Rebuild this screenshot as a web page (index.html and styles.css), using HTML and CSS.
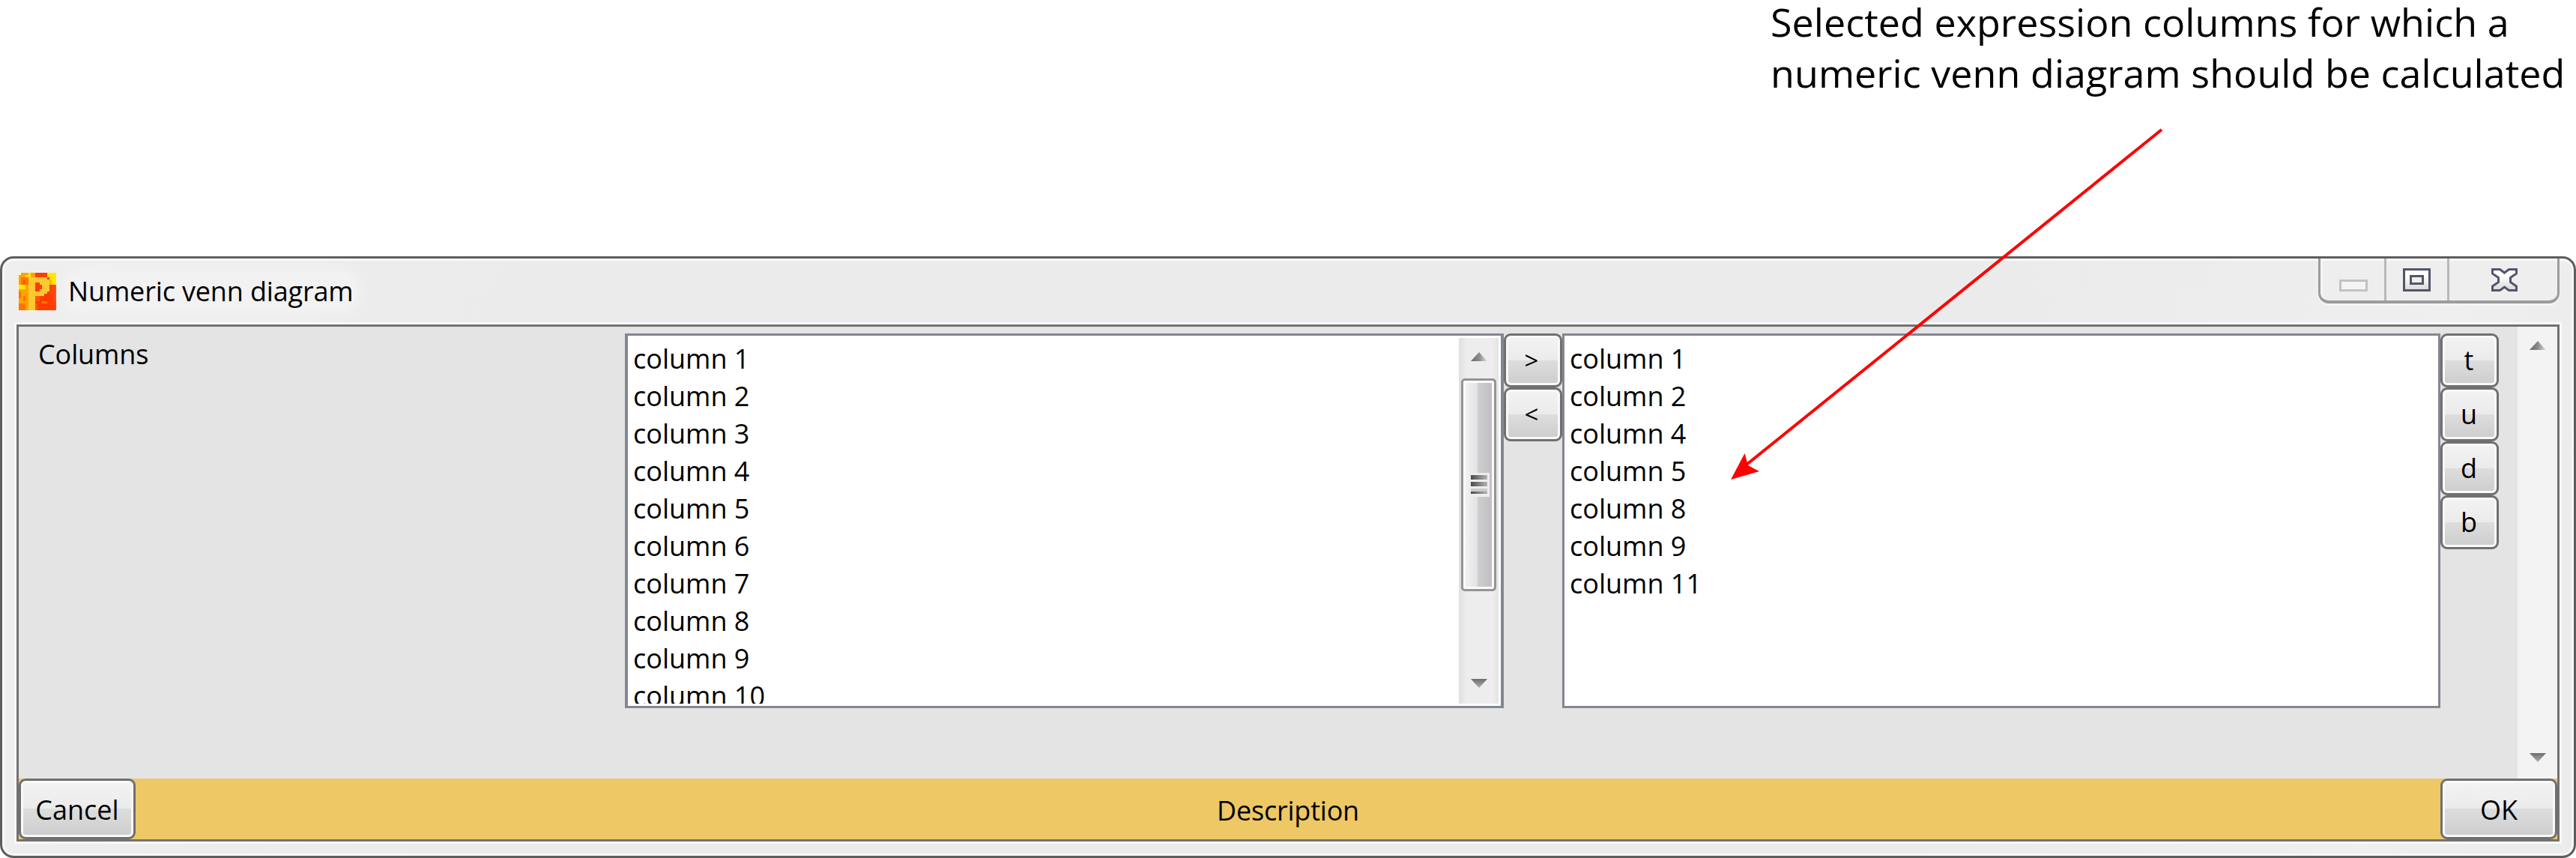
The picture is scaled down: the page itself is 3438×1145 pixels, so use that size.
FILE: index.html
```html
<!DOCTYPE html>
<html lang="en">
<head>
<meta charset="utf-8">
<title>Numeric venn diagram</title>
<link rel="stylesheet" href="styles.css">
</head>
<body>
<div class="page">
  <p class="note"><span class="note-line first">Selected expression columns for which a</span><span class="note-line">numeric venn diagram should be calculated</span></p>

  <div class="window">
    <header class="titlebar">
      <svg class="app-icon" width="50" height="50" viewBox="0 0 16 16" shape-rendering="crispEdges">
        <path fill="#ff3c00" d="M0 0h16v16H0z"/>
        <path fill="#ffa200" d="M0 0h7v2H4v14H0zM5 0h2v2H5z"/>
        <path fill="#ff7400" d="M1 2h3v3H1zM0 8h1v3H0zM0 13h3v3H0zM2 10h1v2H2zM10 12h2v1h-2z"/>
        <path fill="#ff5a00" d="M2 3h1v2H2zM7 10h2v2H7zM7 13h1v3H7z"/>
        <path fill="#ffe600" d="M0 5h2v2H0zM1 5h2v2H1zM3 1h1v1H3zM4 0h1v2H4zM12 0h4v5h-2V3h-1V2h-1z"/>
        <path fill="#ffffb0" d="M0 0h1v1H0z"/>
        <path fill="#ffb400" d="M13 3h1v2h-1z"/>
        <path fill="#ffc830" fill-rule="evenodd" d="M4 2h8v1h1v5h-1v1h-1v1H7v6H4zM7 4v4h2V7h1V5H9V4z"/>
      </svg>
      <span class="title">Numeric venn diagram</span>
      <div class="controls">
        <span class="control minimize"><svg width="38" height="16" viewBox="0 0 38 16"><path d="M1.5 1.5h35v13h-35z" fill="#f4f4f4" stroke="#c2c2c2" stroke-width="3"/></svg></span>
        <span class="control maximize"><svg width="37" height="31" viewBox="0 0 37 31"><path d="M1.5 1.5h34v28h-34z" fill="url(#face)" stroke="#53566a" stroke-width="3"/><path d="M10.500 10.500h16v10h-16z" fill="#eee" stroke="#53566a" stroke-width="3"/></svg></span>
        <span class="control close"><svg width="35" height="31" viewBox="0 0 35 31"><path d="M1.500 1.500H11.500L17.500 6 23.500 1.500H33.500V7L25.500 12.500V18.500L33.500 24V29.500H23.500L17.500 25 11.500 29.500H1.500V24L9.500 18.500V12.500L1.500 7z" fill="url(#face)" stroke="#53566a" stroke-width="3"/></svg></span>
      </div>
    </header>

    <main class="client">
      <section class="form">
        <div class="label">Columns</div>
        <div class="list source">
          <ul class="items">
            <li>column 1</li><li>column 2</li><li>column 3</li><li>column 4</li><li>column 5</li><li>column 6</li><li>column 7</li><li>column 8</li><li>column 9</li><li>column 10</li>
          </ul>
          <div class="scrollbar inner">
            <svg class="arrow" width="22" height="12" viewBox="0 0 22 12"><path d="M0 12 11 0l11 12z" fill="url(#up)"/></svg>
            <div class="thumb"><svg width="28" height="32" viewBox="0 0 28 32"><path d="M0 0h28v32H0z" fill="#ededed"/><path d="M3 3h22v6H3zM3 12h22v6H3zM3 25h22v3H3z" fill="url(#grip)"/><path d="M3 21h22v4H3z" fill="#cacaca"/></svg></div>
            <svg class="arrow" width="22" height="12" viewBox="0 0 22 12"><path d="M0 0h22L11 12z" fill="url(#down)"/></svg>
          </div>
        </div>
        <div class="buttons">
          <button class="btn symbol">&gt;</button>
          <button class="btn symbol">&lt;</button>
        </div>
        <div class="list target">
          <ul class="items">
            <li>column 1</li><li>column 2</li><li>column 4</li><li>column 5</li><li>column 8</li><li>column 9</li><li>column 11</li>
          </ul>
        </div>
        <div class="buttons">
          <button class="btn">t</button>
          <button class="btn">u</button>
          <button class="btn">d</button>
          <button class="btn">b</button>
        </div>
        <div class="scrollbar outer">
          <svg class="arrow" width="22" height="12" viewBox="0 0 22 12"><path d="M0 12 11 0l11 12z" fill="url(#up)"/></svg>
          <svg class="arrow" width="22" height="12" viewBox="0 0 22 12"><path d="M0 0h22L11 12z" fill="url(#down)"/></svg>
        </div>
      </section>
      <footer class="footer">
        <button class="btn wide">Cancel</button>
        <span class="description">Description</span>
        <button class="btn wide">OK</button>
      </footer>
    </main>
  </div>

  <svg class="pointer" width="3438" height="1145" viewBox="0 0 3438 1145">
    <defs>
      <linearGradient id="up"><stop offset="0" stop-color="#6a6a6a"/><stop offset=".5" stop-color="#8a8a8a"/><stop offset="1" stop-color="#e0e0e0"/></linearGradient>
      <linearGradient id="down" x2="0" y2="1"><stop offset="0" stop-color="#6c6c6c"/><stop offset="1" stop-color="#b0b0b0"/></linearGradient>
      <linearGradient id="grip"><stop offset="0" stop-color="#4a4a4a"/><stop offset="1" stop-color="#b4b4b4"/></linearGradient>
      <linearGradient id="face" x2="0" y2="1"><stop offset=".3" stop-color="#fff"/><stop offset="1" stop-color="#d8d8d8"/></linearGradient>
    </defs>
    <path d="M2885 173 2331 620" stroke="#f00" stroke-width="4"/>
    <path d="M2310 640 2328.500 605 2333 621 2348 629z" fill="#f00"/>
  </svg>
</div>
</body>
</html>
```
FILE: styles.css
```css
* { box-sizing: border-box; }

body {
  margin: 0;
  background: #fff;
  color: #000;
  font: 36px/50px "Open Sans", "Noto Sans", sans-serif;
}

.page {
  position: relative;
  width: 3438px;
  height: 1145px;
  display: flex;
  flex-direction: column;
  overflow: hidden;
}

.note {
  flex: 0 0 342px;
  margin: 0;
  padding-left: 2363px;
  font-size: 52px;
  line-height: 70px;
  letter-spacing: .05px;
  white-space: nowrap;
}

.note-line { display: block; }
.note-line.first { line-height: 58px; margin-bottom: 4px; }

.window {
  flex: 1;
  display: flex;
  flex-direction: column;
  padding: 0 19px 19px;
  border: 3px solid #5e5e5e;
  border-radius: 18px;
  background: linear-gradient(100deg, #efefef, #ebebeb 20%, #ebebeb 75%, #efefef 92%, #ebebeb);
  box-shadow: inset 0 0 0 3px #f8f8f8;
}

.titlebar {
  flex: 0 0 88px;
  display: flex;
  align-items: flex-start;
  padding-left: 3px;
}

.app-icon { margin-top: 19px; }

.title {
  margin: 19px 0 0 14px;
  padding: 0 3px 0 2px;
  border-radius: 20px;
  background: #f2f2f2;
  box-shadow: 0 0 16px 6px #f2f2f2;
  letter-spacing: -.15px;
}

.controls {
  display: flex;
  margin-left: auto;
  width: 322px;
  height: 60px;
  border: solid #9c9c9c;
  border-width: 0 3px 4px;
  border-radius: 0 0 14px 14px;
  background: #eee;
  box-shadow: inset 0 3px #f8f8f8, inset 3px 0 #f5f5f5, 0 3px #f5f5f5;
}

.control { display: flex; align-items: flex-start; border-right: 3px solid #b8b8b8; }
.minimize { width: 88px; padding: 28px 0 0 25px; }
.maximize { width: 84px; padding: 13px 0 0 22px; }
.close { flex: 1; padding: 13px 0 0 56px; border: 0; }

.client {
  flex: 1;
  display: flex;
  flex-direction: column;
  border: 3px solid #727272;
  box-shadow: 0 0 0 3px #f8f8f8;
  background: #e4e4e4;
}

.form {
  flex: 1;
  display: flex;
  align-items: flex-start;
}

.label { width: 809px; padding: 12px 0 0 26px; letter-spacing: -.1px; }

.list {
  display: flex;
  height: 500px;
  margin-top: 9px;
  border: 3px solid #828790;
  background: #fff;
}

.source { width: 1173px; padding: 3px; border-width: 3px 4px; }
.target { width: 1172px; padding: 3px; }

.items {
  flex: 1;
  margin: 0;
  padding: 3px 0 0 4px;
  list-style: none;
  overflow: hidden;
}

.scrollbar {
  display: flex;
  flex-direction: column;
  align-items: center;
  width: 53px;
}

.scrollbar svg { display: block; }

.inner {
  padding: 19px 3px 21px;
  background: linear-gradient(90deg, #e0e0e0, #ededed 20%, #ededed 85%, #e3e3e3);
}

.thumb {
  display: flex;
  align-items: center;
  justify-content: center;
  width: 47px;
  height: 284px;
  margin: 23px 0 auto;
  border: 3px solid #959595;
  border-radius: 5px;
  background: linear-gradient(90deg, #f4f4f4, #e3e3e3 45%, #cfcfd1 46%, #bdbdc1);
  box-shadow: inset 0 0 0 3px #fafafa;
}

.outer {
  align-self: stretch;
  justify-content: space-between;
  margin-left: auto;
  padding: 19px 0 22px;
  background: #f3f3f3;
}

.buttons { display: flex; flex-direction: column; margin-top: 9px; }

.btn {
  width: 78px;
  height: 72px;
  padding: 0 2px 0 0;
  border: 3px solid #707070;
  border-radius: 9px;
  background: linear-gradient(#f3f3f3, #ebebeb 50%, #dddddd 50%, #cdcdcd);
  box-shadow: inset 0 0 0 3px #f9f9f9;
  color: #000;
  font: inherit;
}

.btn.symbol { padding-right: 4px; font-size: 33px; }

.footer {
  flex: 0 0 81px;
  display: flex;
  align-items: stretch;
  background: #edc865;
}

.btn.wide { width: 156px; height: 81px; padding: 2px 0 0; }

.description { flex: 1; padding-top: 18px; text-align: center; letter-spacing: -.2px; }

.pointer { position: absolute; left: 0; top: 0; pointer-events: none; }
```
